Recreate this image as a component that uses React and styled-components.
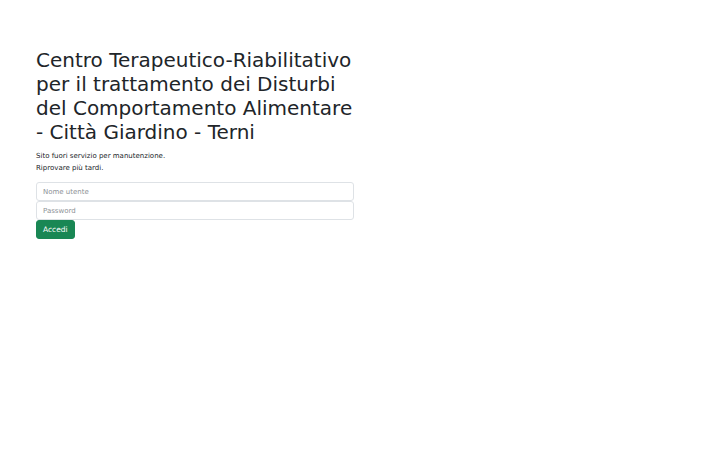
import styled, { createGlobalStyle } from "styled-components";

const GlobalStyle = createGlobalStyle`
  * { box-sizing: border-box; }
  body {
    margin: 0;
    background: #fff;
    color: #212529;
    font-family: "DejaVu Sans", sans-serif;
  }
`;

const Page = styled.main`
  padding: 48px 36px;
`;

const Container = styled.div`
  width: 318px;
  display: flex;
  flex-direction: column;
`;

const Title = styled.h1`
  margin: 0 0 6px;
  font-size: 20px;
  line-height: 24px;
  font-weight: 400;
  color: #212529;
`;

const Notice = styled.p`
  margin: 0;
  font-size: 7px;
  line-height: 12px;
`;

const Form = styled.form`
  margin-top: 8px;
  display: flex;
  flex-direction: column;
`;

const Input = styled.input`
  height: 19px;
  padding: 0 6px;
  font-family: inherit;
  font-size: 7px;
  color: #212529;
  border: 1px solid #dee2e6;
  border-radius: 3px;
  outline: none;

  &::placeholder {
    color: #8d9196;
  }
`;

const Button = styled.button`
  align-self: flex-start;
  height: 19px;
  padding: 0 6px;
  font-family: inherit;
  font-size: 7.5px;
  color: #fff;
  background: #198754;
  border: 1px solid #198754;
  border-radius: 3px;
`;

export default function App() {
  return (
    <>
      <GlobalStyle />
      <Page>
        <Container>
          <Title>
            Centro Terapeutico-Riabilitativo per il trattamento dei Disturbi del
            Comportamento Alimentare - Città Giardino - Terni
          </Title>
          <Notice>Sito fuori servizio per manutenzione.</Notice>
          <Notice>Riprovare più tardi.</Notice>
          <Form onSubmit={(e) => e.preventDefault()}>
            <Input type="text" placeholder="Nome utente" />
            <Input type="password" placeholder="Password" />
            <Button type="submit">Accedi</Button>
          </Form>
        </Container>
      </Page>
    </>
  );
}
